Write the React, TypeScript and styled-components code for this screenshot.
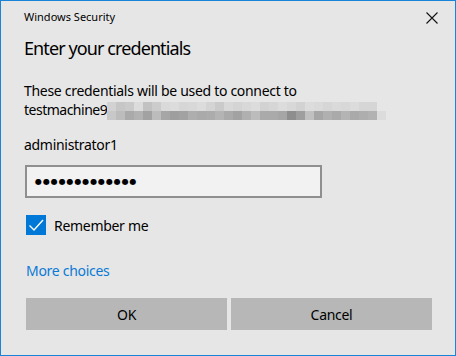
import React, { FC, useState } from 'react';
import styled, { createGlobalStyle } from 'styled-components';

const GlobalStyle = createGlobalStyle`
    html, body {
        margin: 0;
        padding: 0;
        background: #e6e6e6;
    }
    * {
        box-sizing: border-box;
    }
`

// greys of the pixelated host name, two rows of 9px blocks
const topRow = [
    0xd2, 0xc6, 0xca, 0xdc, 0xc2, 0xcc, 0xda, 0xdc, 0xd6, 0xd8,
    0xdc, 0xd4, 0xca, 0xd8, 0xd4, 0xd8, 0xdc, 0xd2, 0xd6, 0xdc,
    0xd8, 0xd2, 0xdc, 0xda, 0xd6, 0xda, 0xd8, 0xdc, 0xd6, 0xd6,
]
const bottomRow = [
    0xc8, 0xbc, 0xaa, 0xb2, 0xa2, 0xbc, 0xa6, 0x9e, 0xa2, 0xae,
    0xaa, 0xac, 0xb4, 0xaa, 0xa2, 0xb0, 0xbc, 0xaa, 0xaa, 0xa6,
    0x8e, 0x9e, 0xc0, 0xa6, 0xb0, 0xaa, 0xb4, 0xaa, 0xae, 0xb2, 0xdc,
]

const hex = (v: number) => {
    const h = v.toString(16).padStart(2, '0')
    return `#${h}${h}${h}`
}

const Mosaic: FC = () => (
    <MosaicSvg width={279} height={18} viewBox="0 0 279 18">
        {topRow.map((v, i) => (
            <rect key={'t' + i} x={i * 9} y={0} width={9} height={9} fill={hex(v)} />
        ))}
        {bottomRow.map((v, i) => (
            <rect key={'b' + i} x={i * 9} y={9} width={9} height={9} fill={hex(v)} />
        ))}
    </MosaicSvg>
)

const CloseIcon: FC = () => (
    <svg width="12" height="12" viewBox="0 0 12 12">
        <path d="M0.5 0.5 L11.5 11.5 M11.5 0.5 L0.5 11.5" stroke="#111" strokeWidth="1.1" fill="none" />
    </svg>
)

const CheckIcon: FC = () => (
    <svg width="20" height="20" viewBox="0 0 20 20">
        <path d="M3.5 10.5 L8 15 L17 5" stroke="#fff" strokeWidth="1.4" fill="none" />
    </svg>
)

const App: FC = () => {
    const [remember, setRemember] = useState(true)

    return (
        <>
            <GlobalStyle />
            <Window>
                <TitleBar>
                    <Title>Windows Security</Title>
                    <CloseButton><CloseIcon /></CloseButton>
                </TitleBar>
                <Content>
                    <Heading>Enter your credentials</Heading>
                    <Message>
                        These credentials will be used to connect to
                        <HostLine>testmachine9<Mosaic /></HostLine>
                    </Message>
                    <UserName>administrator1</UserName>
                    <PasswordBox>
                        <Dots>{'\u25CF'.repeat(13)}</Dots>
                    </PasswordBox>
                    <CheckRow onClick={() => setRemember(!remember)}>
                        <CheckBox checked={remember}>{remember && <CheckIcon />}</CheckBox>
                        <CheckLabel>Remember me</CheckLabel>
                    </CheckRow>
                    <MoreLink>More choices</MoreLink>
                    <Buttons>
                        <Button>OK</Button>
                        <Button>Cancel</Button>
                    </Buttons>
                </Content>
            </Window>
        </>
    )
}
export default App

const Window = styled.div`
    width: 456px;
    height: 356px;
    border: 1px solid #1883d7;
    background: #e6e6e6;
    font-family: "Segoe UI", "Noto Sans", "Open Sans", sans-serif;
    color: #000;
    display: flex;
    flex-direction: column;
`

const TitleBar = styled.div`
    height: 31px;
    display: flex;
    align-items: center;
    justify-content: space-between;
    padding: 0 17px 0 23px;
`

const Title = styled.div`
    font-size: 11px;
    line-height: 16px;
    margin-top: 1px;
`

const CloseButton = styled.div`
    width: 12px;
    height: 12px;
    display: flex;
    margin-top: 3px;
`

const Content = styled.div`
    padding: 0 23px 0 23px;
    display: flex;
    flex-direction: column;
`

const Heading = styled.div`
    font-size: 18px;
    letter-spacing: -0.9px;
    line-height: 26px;
    margin-top: 3px;
`

const Message = styled.div`
    font-size: 14px;
    letter-spacing: -0.3px;
    line-height: 18px;
    margin-top: 21px;
`

const HostLine = styled.div`
    display: flex;
    align-items: center;
    letter-spacing: -0.5px;
`

const MosaicSvg = styled.svg`
    display: block;
    margin-left: 0;
    margin-top: 2px;
`

const UserName = styled.div`
    font-size: 14px;
    letter-spacing: -0.3px;
    line-height: 19px;
    margin-top: 15px;
`

const PasswordBox = styled.div`
    width: 297px;
    height: 33px;
    margin-top: 11px;
    margin-left: 1px;
    border: 2px solid #8f8f8f;
    background: #f2f2f2;
    display: flex;
    align-items: center;
    padding-left: 8px;
`

const Dots = styled.span`
    font-size: 8px;
    letter-spacing: 0.9px;
    font-family: "DejaVu Sans", sans-serif;
`

const CheckRow = styled.div`
    display: flex;
    align-items: center;
    margin-top: 17px;
    margin-left: 2px;
    cursor: pointer;
`

const CheckBox = styled.div<{ checked: boolean }>`
    width: 20px;
    height: 20px;
    background: ${props => props.checked ? '#0078d7' : '#fff'};
    border: ${props => props.checked ? 'none' : '2px solid #333'};
`

const CheckLabel = styled.span`
    font-size: 14px;
    letter-spacing: -0.3px;
    margin-left: 8px;
`

const MoreLink = styled.a`
    font-size: 14px;
    letter-spacing: -0.3px;
    line-height: 19px;
    color: #0a7ad6;
    margin-top: 26px;
    margin-left: 2px;
    cursor: pointer;
`

const Buttons = styled.div`
    display: grid;
    grid-template-columns: 1fr 1fr;
    gap: 4px;
    margin-top: 18px;
    margin-left: 2px;
    width: 406px;
`

const Button = styled.button`
    height: 32px;
    border: none;
    background: #b7b7b7;
    font-family: inherit;
    font-size: 14px;
    letter-spacing: -0.3px;
    color: #000;
    padding: 0;
`
